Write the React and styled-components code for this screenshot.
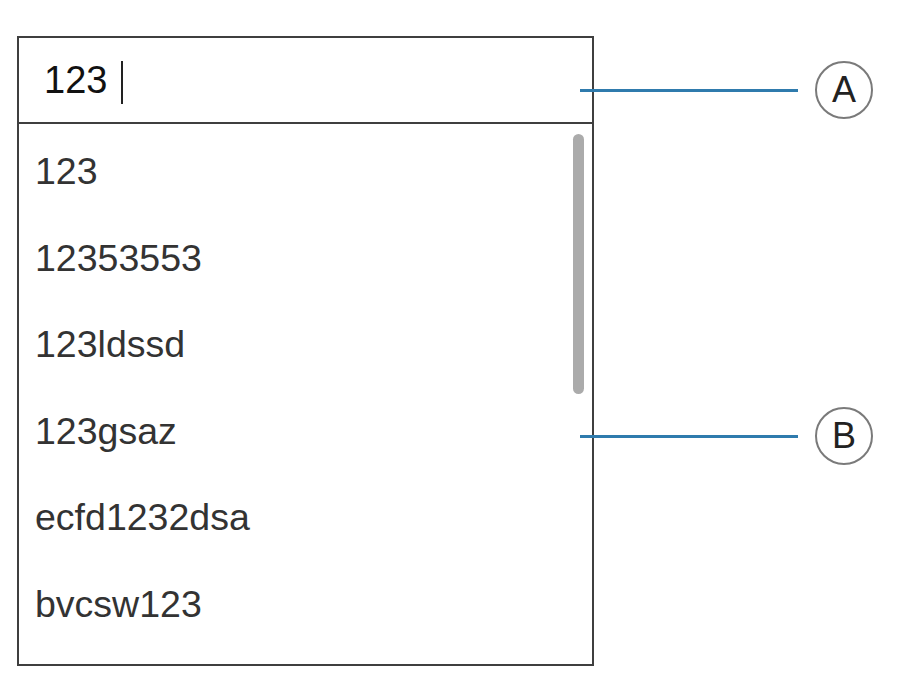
import React from 'react'
import styled, { createGlobalStyle } from 'styled-components';

const GlobalStyle = createGlobalStyle`
    html, body {
        margin: 0;
        padding: 0;
        background: #fff;
    }

    body {
        font-family: "Liberation Sans", Arial, Helvetica, sans-serif;
    }
`;

const items = ['123', '12353553', '123ldssd', '123gsaz', 'ecfd1232dsa', 'bvcsw123'];

const App = () => {
    return (
        <>
            <GlobalStyle />
            <Page>
                <Combo>
                    <SearchField>
                        <Query>123</Query>
                        <Caret />
                    </SearchField>
                    <Results>
                        {items.map(item => (
                            <ResultItem key={item}>{item}</ResultItem>
                        ))}
                        <ScrollThumb />
                    </Results>
                </Combo>

                <Callout top={90}>
                    <Leader />
                    <Badge>A</Badge>
                </Callout>
                <Callout top={436}>
                    <Leader />
                    <Badge>B</Badge>
                </Callout>
            </Page>
        </>
    )
}

export default App;

const Page = styled.div`
    position: relative;
    width: 904px;
    height: 688px;
    padding: 36px 0 0 17px;
    box-sizing: border-box;
`;

const Combo = styled.div`
    display: flex;
    flex-direction: column;
    width: 577px;
    height: 630px;
    box-sizing: border-box;
    border: 2px solid #3f3f3f;
    background-color: #fff;
`;

const SearchField = styled.div`
    display: flex;
    align-items: center;
    height: 84px;
    padding-left: 25px;
    border-bottom: 2px solid #3f3f3f;
    flex-shrink: 0;
`;

const Query = styled.span`
    font-size: 38px;
    line-height: 84px;
    color: #111;
`;

const Caret = styled.span`
    display: block;
    width: 2px;
    height: 43px;
    margin-left: 14px;
    margin-top: 4px;
    background-color: #222;
`;

const Results = styled.div`
    position: relative;
    flex-grow: 1;
    display: flex;
    flex-direction: column;
    padding-top: 4px;
`;

const ResultItem = styled.div`
    height: 86.6px;
    line-height: 86.6px;
    padding-left: 16px;
    font-size: 37.5px;
    color: #333;
    flex-shrink: 0;
`;

const ScrollThumb = styled.div`
    position: absolute;
    top: 10px;
    right: 8px;
    width: 11px;
    height: 260px;
    border-radius: 6px;
    background-color: #ababab;
`;

const Callout = styled.div`
    position: absolute;
    left: 580px;
    top: ${props => props.top - 29}px;
    display: flex;
    align-items: center;
    height: 58px;
`;

const Leader = styled.div`
    width: 218px;
    height: 3px;
    background-color: #2f7bad;
`;

const Badge = styled.div`
    display: flex;
    align-items: center;
    justify-content: center;
    width: 58px;
    height: 58px;
    margin-left: 17px;
    box-sizing: border-box;
    border: 2px solid #7a7a7a;
    border-radius: 50%;
    font-size: 36px;
    color: #222;
`;
